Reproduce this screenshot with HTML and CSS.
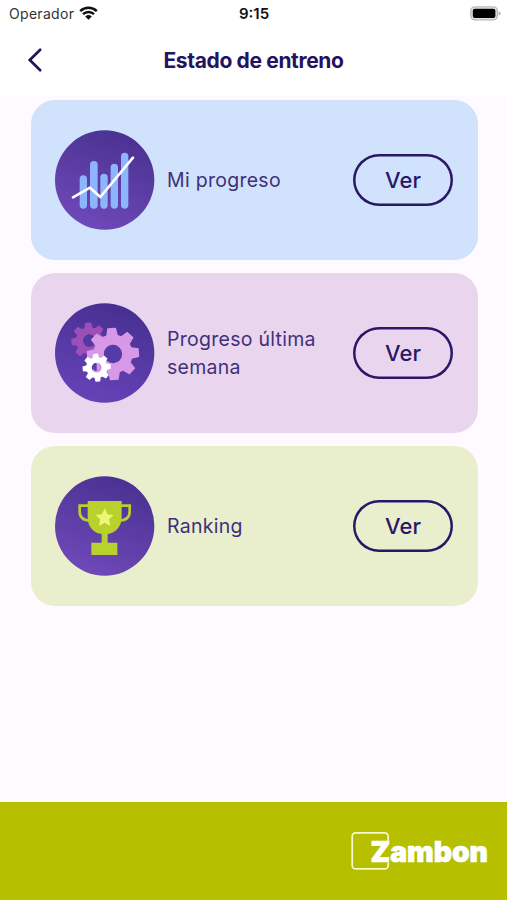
FILE: index.html
```html
<!DOCTYPE html>
<html lang="es">
<head>
<meta charset="utf-8">
<title>Estado de entreno</title>
<link rel="stylesheet" href="styles.css">
</head>
<body>
<div class="app">
  <div class="status">
    <div class="carrier">
      <span class="carrier-name">Operador</span>
      <svg class="wifi" width="19" height="14" viewBox="0 0 19 14">
        <path d="M1.2 5.1A12 12 0 0 1 17.8 5.1M4 8.2A8 8 0 0 1 15 8.2" fill="none" stroke="#111" stroke-width="2.5"/>
        <path d="M6.2 10.4A5 5 0 0 1 12.8 10.4L9.5 13.8Z" fill="#111"/>
      </svg>
    </div>
    <span class="time">9:15</span>
    <svg class="battery" width="31" height="15" viewBox="0 0 31 15">
      <rect x="0.9" y="0.9" width="26.4" height="13" rx="4" fill="#e4e4e4" stroke="#b9b9b9" stroke-width="1.4"/>
      <rect x="2.8" y="2.8" width="22.6" height="9.2" rx="2" fill="#000"/>
      <path d="M28.6 5.2Q30.6 5.8 30.6 7.4T28.6 9.6Z" fill="#b0b0b0"/>
    </svg>
  </div>
  <header class="header">
    <svg class="back" width="16" height="26" viewBox="0 0 16 26"><path d="M13.2 2.7L2.8 13L13.2 23.3" fill="none" stroke="#24145f" stroke-width="2.7" stroke-linecap="round"/></svg>
    <h1 class="title">Estado de entreno</h1>
  </header>
  <main class="cards">
    <section class="card blue">
      <svg class="badge" viewBox="30 30 300 300">
        <defs><linearGradient id="violet" x1=".7" y1="0" x2=".3" y2="1"><stop offset="0" stop-color="#493190"/><stop offset="1" stop-color="#7049ba"/></linearGradient></defs>
        <circle cx="179" cy="180" r="149" fill="url(#violet)"/>
        <g fill="#8db5fb">
          <rect x="104" y="166" width="22" height="100" rx="11"/>
          <rect x="135" y="123" width="23" height="143" rx="11"/>
          <rect x="166" y="161" width="22" height="105" rx="11"/>
          <rect x="197" y="131" width="22" height="135" rx="11"/>
          <rect x="228" y="98" width="22" height="168" rx="11"/>
        </g>
        <path d="M84 232L135 203L166 231L264 113" fill="none" stroke="#fff" stroke-width="8" stroke-linecap="round" stroke-linejoin="round"/>
      </svg>
      <p class="label">Mi progreso</p>
      <button class="view">Ver</button>
    </section>
    <section class="card pink">
      <svg class="badge" viewBox="30 30 300 300">
        <defs>
          <linearGradient id="indigo" x1=".7" y1="0" x2=".4" y2="1"><stop offset="0" stop-color="#462f90"/><stop offset="1" stop-color="#6543b8"/></linearGradient>
          <path id="tooth" d="M-18 -52L-13 -78H13L18 -52Z"/>
          <g id="gear">
            <circle r="43" fill="none" stroke="currentColor" stroke-width="31"/>
            <g fill="currentColor">
              <use href="#tooth"/><use href="#tooth" transform="rotate(45)"/><use href="#tooth" transform="rotate(90)"/><use href="#tooth" transform="rotate(135)"/><use href="#tooth" transform="rotate(180)"/><use href="#tooth" transform="rotate(225)"/><use href="#tooth" transform="rotate(270)"/><use href="#tooth" transform="rotate(315)"/>
            </g>
          </g>
        </defs>
        <circle cx="179" cy="180" r="149" fill="url(#indigo)"/>
        <use href="#gear" class="gear-plum" transform="translate(133 143) rotate(-4) scale(.69)"/>
        <circle cx="205" cy="182" r="35" fill="#563aa5"/>
        <use href="#gear" class="gear-orchid" transform="translate(204 183) rotate(-3)"/>
        <use href="#gear" class="gear-white" transform="translate(155 224) rotate(-5) scale(.54)"/>
        <circle cx="155" cy="223" r="11" fill="#5b3caa"/>
        <path d="M155 212A11 11 0 0 1 155 234Z" fill="#d798e8"/>
      </svg>
      <p class="label">Progreso última semana</p>
      <button class="view">Ver</button>
    </section>
    <section class="card green">
      <svg class="badge" viewBox="30 30 300 300">
        <circle cx="179" cy="180" r="149" fill="url(#violet)"/>
        <path d="M130 119H104V137Q104 163 137 164M228 119H254V137Q254 163 221 164" fill="none" stroke="#b8d12c" stroke-width="8"/>
        <path d="M128 105H230V153C230 184 209 202 188 204V230H217V267H139V230H170V204C147 202 128 184 128 153Z" fill="#b8d12c"/>
        <path d="M179 127L187 145L206 147L192 160L196 180L179 170L162 180L166 160L152 147L171 145Z" fill="#eff779"/>
      </svg>
      <p class="label">Ranking</p>
      <button class="view">Ver</button>
    </section>
  </main>
  <footer class="footer">
    <svg class="logo" width="140" height="40" viewBox="0 0 140 40">
      <rect x="2.2" y="1.9" width="36" height="36" rx="3.5" fill="none" stroke="#f7f9cf" stroke-width="1.7"/>
      <path d="M36 13H40V31.5H36Z" fill="#b6bf00"/>
      <text class="wordmark" x="20.5" y="31" textLength="117.5" lengthAdjust="spacingAndGlyphs">Zambon</text>
    </svg>
  </footer>
</div>
</body>
</html>
```

FILE: styles.css
```css
* { box-sizing: border-box; }
body { margin: 0; font-family: Inter, "Liberation Sans", sans-serif; background: #fefaff; }
.app { display: flex; flex-direction: column; width: 507px; height: 900px; }
.status { display: grid; grid-template-columns: 1fr auto 1fr; align-items: center; height: 28px; padding: 0 6px 1px 9px; background: #fff; }
.carrier { display: flex; align-items: center; gap: 5px; }
.carrier-name { font-size: 14px; letter-spacing: .3px; color: #333; }
.wifi { margin-top: -1px; }
.time { margin-right: 2px; font-size: 15px; font-weight: 600; color: #111; }
.battery { justify-self: end; margin-top: 0; }
.header { display: grid; grid-template-columns: 60px 1fr 60px; align-items: center; height: 68px; padding-bottom: 4px; background: #fff; }
.back { margin-left: 27px; margin-top: -1px; }
.title { margin: 0; text-align: center; font-size: 21px; font-weight: 650; letter-spacing: -.35px; color: #24145f; }
.cards { display: flex; flex-direction: column; gap: 13px; flex: 1; padding: 4px 29.5px 0 30.5px; }
.card { display: flex; align-items: center; height: 160px; padding: 0 24.5px; border-radius: 24px; }
.blue { background: #d0e2fc; }
.pink { background: #e9d6ee; }
.green { background: #e9efcc; }
.badge { flex: none; width: 100px; height: 100px; }
.gear-plum { color: #9d4fb8; }
.gear-orchid { color: #d798e8; }
.gear-white { color: #fff; }
.label { flex: 1; margin: 0 0 0 12px; font-size: 19.5px; line-height: 28px; letter-spacing: .28px; color: #40307b; }
.view { width: 100px; height: 52px; padding: 0; border: 0; box-shadow: inset 0 0 0 2.5px #2a1768; border-radius: 26px; background: none; font: 500 22px Inter, sans-serif; letter-spacing: .1px; color: #2a1768; }
.footer { display: flex; justify-content: flex-end; height: 98px; padding: 29px 17px 0 0; background: #b6bf00; }
.wordmark { font: 900 29px Inter, sans-serif; fill: #fff; stroke: #fff; stroke-width: .7px; }
```
